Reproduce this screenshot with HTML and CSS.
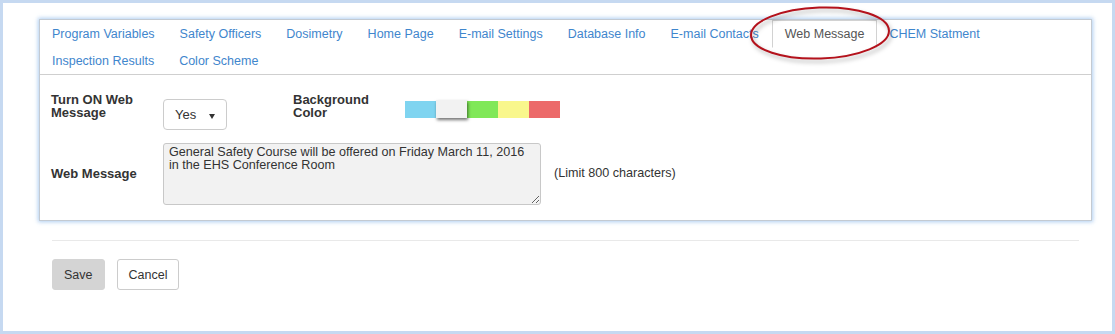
FILE: index.html
```html
<!DOCTYPE html>
<html>
<head>
    <title>Web Message Settings</title>
    <link rel="stylesheet" href="styles.css">
</head>
<body>
    <div class="frame">
        <div class="panel">
            <ul class="tabs">
                <li><a href="#">Program Variables</a></li>
                <li><a href="#">Safety Officers</a></li>
                <li><a href="#">Dosimetry</a></li>
                <li><a href="#">Home Page</a></li>
                <li><a href="#">E-mail Settings</a></li>
                <li><a href="#">Database Info</a></li>
                <li><a href="#">E-mail Contacts</a></li>
                <li class="active"><a href="#">Web Message</a></li>
                <li><a href="#">CHEM Statment</a></li>
                <li><a href="#">Inspection Results</a></li>
                <li><a href="#">Color Scheme</a></li>
            </ul>
            <div class="tab-content">
                <div class="form-row">
                    <label class="field-label">Turn ON Web Message</label>
                    <div class="select-wrap">
                        <select class="yes-no">
                            <option>Yes</option>
                            <option>No</option>
                        </select>
                    </div>
                    <label class="field-label">Background Color</label>
                    <div class="swatches">
                        <span class="swatch blue"></span>
                        <span class="swatch white selected"></span>
                        <span class="swatch green"></span>
                        <span class="swatch yellow"></span>
                        <span class="swatch red"></span>
                    </div>
                </div>
                <div class="form-row message-row">
                    <label class="field-label">Web Message</label>
                    <textarea class="message">General Safety Course will be offered on Friday March 11, 2016 in the EHS Conference Room</textarea>
                    <span class="limit">(Limit 800 characters)</span>
                </div>
            </div>
        </div>
        <div class="footer">
            <div class="actions">
                <button class="btn btn-save">Save</button>
                <button class="btn btn-cancel">Cancel</button>
            </div>
        </div>
        <!-- annotation circling the active tab -->
        <svg class="callout" width="150" height="64" viewBox="0 0 150 64">
            <ellipse cx="72" cy="28" rx="69" ry="25.5" transform="rotate(-2 72 28)" fill="none" stroke="#b4121c" stroke-width="2"/>
        </svg>
    </div>
</body>
</html>
```

FILE: styles.css
```css
body {
    margin: 0;
    font-family: "Liberation Sans", Arial, sans-serif;
    font-size: 13px;
    color: #333;
}
.frame {
    position: relative;
    height: 334px;
    box-sizing: border-box;
    border: 3px solid #c6d9f1;
    background-color: #fff;
}
.panel {
    margin: 16px 20px 0 36px;
    border: 1px solid #c3cad2;
    box-shadow: 0 0 4px 1px rgba(140, 185, 235, 0.7);
    background-color: #fff;
}

/* tabs */
.tabs {
    display: flex;
    flex-wrap: wrap;
    list-style: none;
    margin: 0;
    padding: 0;
    border-bottom: 1px solid #cfcfcf;
    font-size: 12.5px;
}
.tabs li {
    margin-bottom: -1px;
}
.tabs a {
    display: block;
    padding: 6px 12px 5px 11px;
    line-height: 15px;
    border: 1px solid transparent;
    color: #3f86cd;
    text-decoration: none;
}
.tabs .active a {
    padding: 6px 12px 5px 12px;
    color: #555;
    background-color: #fff;
    border-color: #d2d2d2 #d2d2d2 #fff;
}

/* form */
.tab-content {
    padding: 18px 11px 15px;
}
.form-row {
    display: grid;
    grid-template-columns: 112px 130px 112px 1fr;
    align-items: start;
}
.field-label {
    width: 100px;
    font-weight: bold;
    line-height: 13px;
}
.select-wrap {
    position: relative;
    width: 64px;
    margin-top: 6px;
}
.select-wrap::after {
    content: "";
    position: absolute;
    left: 46px;
    top: 15px;
    border-left: 3.5px solid transparent;
    border-right: 3.5px solid transparent;
    border-top: 5px solid #333;
}
.yes-no {
    appearance: none;
    width: 64px;
    height: 31px;
    padding: 0 0 0 11px;
    border: 1px solid #ccc;
    border-radius: 4px;
    background-color: #fff;
    font-family: inherit;
    font-size: 13px;
    color: #333;
}
.swatches {
    display: flex;
    margin-top: 8px;
}
.swatch {
    width: 31px;
    height: 17px;
}
.swatch.blue { background-color: #7fd4f0; }
.swatch.white { background-color: #f2f2f2; }
.swatch.green { background-color: #80e858; }
.swatch.yellow { background-color: #f9f78c; }
.swatch.red { background-color: #ec6a6a; }
.swatch.selected {
    margin-top: -1px;
    height: 18px;
    box-shadow: 1px 2px 3px rgba(0, 0, 0, 0.55);
    position: relative;
}
.message-row {
    display: flex;
    align-items: center;
    margin-top: 13px;
}
.message-row .field-label {
    width: 112px;
    flex-shrink: 0;
    margin-top: -2px;
}
.message {
    box-sizing: border-box;
    width: 378px;
    height: 62px;
    margin: 0;
    padding: 2px 5px;
    border: 1px solid #c8c8c8;
    border-radius: 3px;
    background-color: #f2f2f2;
    font-family: inherit;
    font-size: 12.6px;
    line-height: 13px;
    color: #333;
    resize: both;
}
.limit {
    margin-left: 13px;
    margin-top: -2px;
    font-size: 12.6px;
}

/* footer buttons */
.footer {
    margin: 19px 33px 0 49px;
    border-top: 1px solid #e9e9e9;
}
.actions {
    display: flex;
    gap: 12px;
    margin-top: 18px;
}
.btn {
    height: 31px;
    padding: 0 11px;
    border: 1px solid #ccc;
    border-radius: 3px;
    font-family: inherit;
    font-size: 12.5px;
    color: #333;
    cursor: pointer;
}
.btn-save {
    background-color: #d4d4d4;
    border-color: #d4d4d4;
}
.btn-cancel {
    background-color: #fff;
}

.callout {
    position: absolute;
    left: 745px;
    top: 2px;
    filter: drop-shadow(2px 3px 2px rgba(0, 0, 0, 0.3));
}
```
